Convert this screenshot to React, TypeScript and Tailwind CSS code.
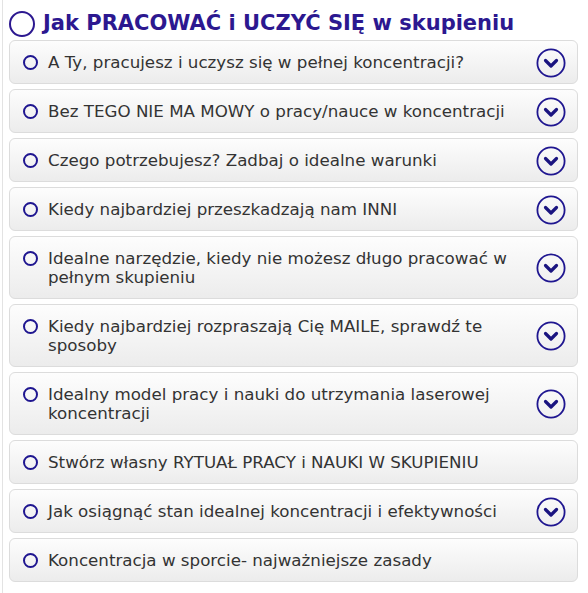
import { useState } from 'react'

type Item = { title: string; more: boolean }

const items: Item[] = [
  { title: 'A Ty, pracujesz i uczysz się w pełnej koncentracji?', more: true },
  { title: 'Bez TEGO NIE MA MOWY o pracy/nauce w koncentracji', more: true },
  { title: 'Czego potrzebujesz? Zadbaj o idealne warunki', more: true },
  { title: 'Kiedy najbardziej przeszkadzają nam INNI', more: true },
  {
    title: 'Idealne narzędzie, kiedy nie możesz długo pracować w pełnym skupieniu',
    more: true,
  },
  { title: 'Kiedy najbardziej rozpraszają Cię MAILE, sprawdź te sposoby', more: true },
  {
    title: 'Idealny model pracy i nauki do utrzymania laserowej koncentracji',
    more: true,
  },
  { title: 'Stwórz własny RYTUAŁ PRACY i NAUKI W SKUPIENIU', more: false },
  { title: 'Jak osiągnąć stan idealnej koncentracji i efektywności', more: true },
  { title: 'Koncentracja w sporcie- najważniejsze zasady', more: false },
]

function Chevron() {
  return (
    <svg className="size-[30px] shrink-0" viewBox="0 0 30 30" fill="none">
      <circle cx="15" cy="15" r="13.6" stroke="#1f1690" strokeWidth="1.8" />
      <path
        d="M9.5 12.5 15 18l5.5-5.5"
        stroke="#1a1480"
        strokeWidth="3.2"
        strokeLinecap="round"
        strokeLinejoin="round"
      />
    </svg>
  )
}

export default function App() {
  const [open, setOpen] = useState<number | null>(null)
  return (
    <div className="min-h-[593px] bg-white pl-[2px] font-['DejaVu_Sans',Verdana,sans-serif]">
      <div className="min-h-[593px] border-l border-[#e3e3e3] pr-[10px] pl-[6px]">
        <h1 className="flex h-[40px] items-center gap-[8px] pt-[7px] text-[21px] font-bold text-[#2c1890]">
          <span className="size-[26px] shrink-0 rounded-full border-2 border-[#2c1890]" />
          Jak PRACOWAĆ i UCZYĆ SIĘ w skupieniu
        </h1>
        <div className="flex flex-col gap-[5px]">
          {items.map((item, i) => (
            <button
              className="flex w-full items-center gap-[10px] rounded-[6px] border border-[#dcdcdc] bg-linear-to-b from-[#fdfdfd] to-[#ececec] pt-[12px] pr-[11px] pb-[11px] pl-[13px] text-left text-[16.7px] leading-[19px] text-[#333]"
              key={item.title}
              onClick={() => setOpen(open === i ? null : i)}
              type="button"
            >
              <span className="mt-[2px] size-[15px] shrink-0 self-start rounded-full border-2 border-[#1f1690]" />
              <span className="flex-1 pr-[16px]">{item.title}</span>
              {item.more && (
                <span className="my-[-6px]">
                  <Chevron />
                </span>
              )}
            </button>
          ))}
        </div>
      </div>
    </div>
  )
}
